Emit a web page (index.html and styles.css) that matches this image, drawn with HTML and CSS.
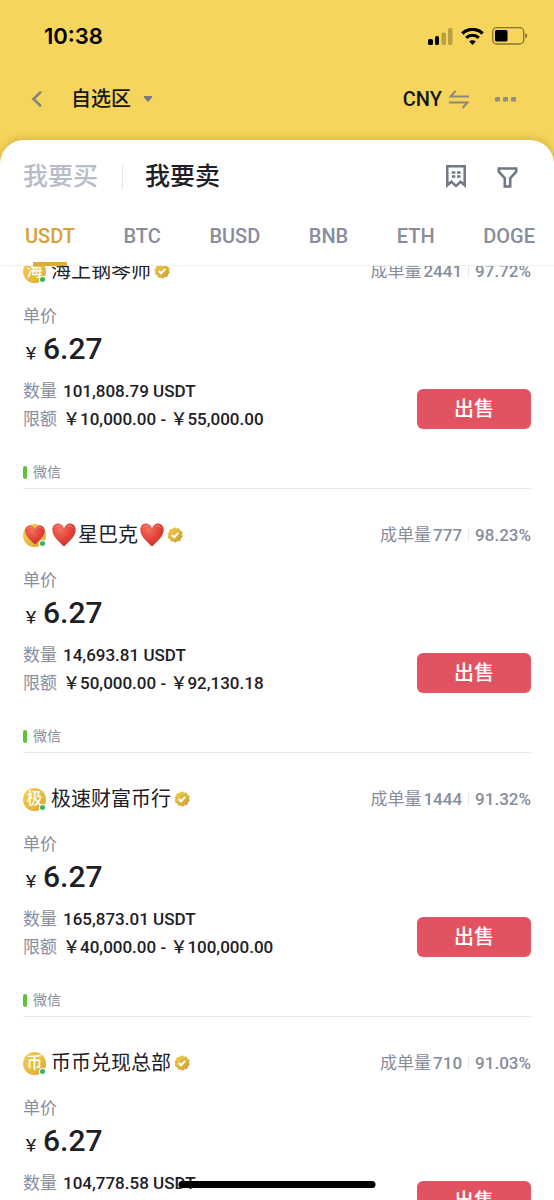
FILE: index.html
```html
<!DOCTYPE html>
<html lang="zh-CN">
<head>
<meta charset="utf-8">
<meta name="viewport" content="width=device-width, initial-scale=1">
<title>自选区</title>
<link rel="stylesheet" href="styles.css">
</head>
<body>
<svg class="defs" aria-hidden="true">
  <defs>
    <linearGradient id="gold" x1="0" y1="0" x2="1" y2="1">
      <stop offset="0" stop-color="#f3cf4c"/><stop offset="1" stop-color="#c99b2c"/>
    </linearGradient>
    <radialGradient id="red" cx=".35" cy=".25" r=".8">
      <stop offset="0" stop-color="#f4705f"/><stop offset=".55" stop-color="#e5443a"/><stop offset="1" stop-color="#c2302a"/>
    </radialGradient>
    <symbol id="badge" viewBox="0 0 16 16">
      <path fill="url(#gold)" stroke="url(#gold)" stroke-width="1" stroke-linejoin="round" d="M8 .8 9.9 2.1 12.2 1.9 13.1 4 15.1 5.200 14.600 7.500 15.300 9.700 13.600 11.200 12.900 13.500 10.600 13.700 8.700 15.200 6.700 14 4.300 14.200 3.500 12.100 1.300 11 1.700 8.700 .8 6.500 2.500 4.900 3 2.600 5.300 2.300Z"/>
      <path fill="none" stroke="#fff" stroke-width="2" d="m4.800 8 2.300 2.300 4.300-4.400"/>
    </symbol>
    <symbol id="heart" viewBox="0 0 24 24">
      <path fill="url(#red)" d="M12 5C10.500 2 8.500 .6 6 .6 2.700 .6 .3 3.300 .3 7c0 6.500 6.700 11.500 11.700 16.600C17 18.500 23.700 13.500 23.700 7c0-3.700-2.400-6.400-5.700-6.400-2.500 0-4.500 1.400-6 4.400Z"/>
      <path fill="none" stroke="#f9a090" stroke-width="1" stroke-linecap="round" opacity=".7" d="M3 4.500C4 2.800 6.500 2 8.500 3.200M15.500 3.200c2-1.200 4.500-.4 5.500 1.300"/>
    </symbol>
  </defs>
</svg>

<header class="top">
  <div class="status">
    <span class="time">10:38</span>
    <div class="signals">
      <svg width="25" height="17" viewBox="0 0 25 17" aria-label="信号">
        <rect x="0" y="11" width="5" height="6" rx="1.500"/>
        <rect x="7" y="8" width="4" height="9" rx="1.500"/>
        <rect x="13.500" y="4.500" width="4.500" height="12.500" rx="1.500" opacity=".25"/>
        <rect x="20" y="0" width="4.500" height="17" rx="1.500" opacity=".25"/>
      </svg>
      <svg width="23" height="17" viewBox="0 0 23 17" aria-label="无线网络">
        <g fill="none" stroke="#000" stroke-width="3.200">
          <path d="M1.300 5.500a14.500 14.500 0 0 1 20.400 0"/>
          <path d="M5.200 9.800a9 9 0 0 1 12.600 0"/>
        </g>
        <path d="M11.500 17 8.200 13.600a4.700 4.700 0 0 1 6.600 0Z"/>
      </svg>
      <svg width="36" height="18" viewBox="0 0 36 18" aria-label="电池">
        <rect x=".7" y=".7" width="31" height="16.300" rx="4" fill="none" stroke="#000" stroke-width="1.300" opacity=".45"/>
        <rect x="3" y="3" width="12.500" height="11.500" rx="1.500"/>
        <path d="M33.300 6.300c2.400.8 2.400 4.300 0 5.100Z" opacity=".5"/>
      </svg>
    </div>
  </div>
  <nav class="bar">
    <button class="icon-btn back" type="button" aria-label="返回">
      <svg width="12" height="18" viewBox="0 0 12 18"><path d="M10 1.800 2.500 9l7.500 7.200" fill="none" stroke="#86857e" stroke-width="2.600"/></svg>
    </button>
    <button class="zone" type="button">自选区
      <svg width="10" height="8" viewBox="0 0 10 8"><path d="M1.500 1h7a.8.8 0 0 1 .6 1.300L5.600 6.500a.8.8 0 0 1-1.200 0L.9 2.300A.8.8 0 0 1 1.500 1Z" fill="#7b7c82"/></svg>
    </button>
    <button class="currency" type="button">CNY
      <svg width="22" height="19" viewBox="0 0 22 19"><path d="M21 6.500H2.500L7.500 1M1 12.500h18.500l-5 5.500" fill="none" stroke="#8b8878" stroke-width="1.900"/></svg>
    </button>
    <button class="icon-btn" type="button" aria-label="更多">
      <svg width="21" height="5" viewBox="0 0 21 5" fill="#918f8c"><rect width="5" height="4.500" rx=".8"/><rect x="8" width="5" height="4.500" rx=".8"/><rect x="16" width="5" height="4.500" rx=".8"/></svg>
    </button>
  </nav>
</header>

<main class="sheet">
  <div class="sides">
    <button class="side" type="button">我要买</button>
    <span class="rule"></span>
    <button class="side active" type="button">我要卖</button>
    <button class="icon-btn orders" type="button" aria-label="订单">
      <svg width="20" height="24" viewBox="0 0 20 24">
        <path d="M1.300 20.300V1.300h17.400v19l-4-3.600-4.700 4.200-4.700-4.200Z" fill="none" stroke="#6f7785" stroke-width="2.500"/>
        <path d="M5.800 6.200h3.500v2.500H5.800zM11 6.200h3.500v2.500H11zM5.800 10.300h3.500v2.500H5.800zM11 10.300h3.500v2.500H11z" fill="#6f7785"/>
      </svg>
    </button>
    <button class="icon-btn" type="button" aria-label="筛选">
      <svg width="21" height="21" viewBox="0 0 21 21"><path d="M1.800 1.500h17.400v3.200l-6 6.500v8.300H7.800v-8.300l-6-6.500Z" fill="none" stroke="#6f7785" stroke-width="2.600"/></svg>
    </button>
  </div>
  <nav class="coins">
    <a class="coin active" href="#usdt">USDT</a>
    <a class="coin" href="#btc">BTC</a>
    <a class="coin" href="#busd">BUSD</a>
    <a class="coin" href="#bnb">BNB</a>
    <a class="coin" href="#eth">ETH</a>
    <a class="coin" href="#doge">DOGE</a>
  </nav>

  <div class="viewport">
    <div class="list">
      <article class="offer">
        <div class="head">
          <span class="avatar">海</span>
          <h2 class="name">海上钢琴师</h2>
          <svg class="badge"><use href="#badge"/></svg>
          <p class="stats">成单量 <b>2441</b><i class="sep"></i><b>97.72%</b></p>
        </div>
        <p class="label">单价</p>
        <p class="price"><span class="yen">￥</span>6.27</p>
        <div class="body">
          <dl class="facts">
            <dt>数量</dt><dd>101,808.79 USDT</dd>
            <dt>限额</dt><dd>￥10,000.00 - ￥55,000.00</dd>
          </dl>
          <button class="sell" type="button">出售</button>
        </div>
        <p class="pay">微信</p>
      </article>

      <article class="offer">
        <div class="head">
          <span class="avatar"><svg class="heart small"><use href="#heart"/></svg></span>
          <h2 class="name with-hearts"><svg class="heart"><use href="#heart"/></svg>星巴克<svg class="heart"><use href="#heart"/></svg></h2>
          <svg class="badge"><use href="#badge"/></svg>
          <p class="stats">成单量 <b>777</b><i class="sep"></i><b>98.23%</b></p>
        </div>
        <p class="label">单价</p>
        <p class="price"><span class="yen">￥</span>6.27</p>
        <div class="body">
          <dl class="facts">
            <dt>数量</dt><dd>14,693.81 USDT</dd>
            <dt>限额</dt><dd>￥50,000.00 - ￥92,130.18</dd>
          </dl>
          <button class="sell" type="button">出售</button>
        </div>
        <p class="pay">微信</p>
      </article>

      <article class="offer">
        <div class="head">
          <span class="avatar">极</span>
          <h2 class="name">极速财富币行</h2>
          <svg class="badge"><use href="#badge"/></svg>
          <p class="stats">成单量 <b>1444</b><i class="sep"></i><b>91.32%</b></p>
        </div>
        <p class="label">单价</p>
        <p class="price"><span class="yen">￥</span>6.27</p>
        <div class="body">
          <dl class="facts">
            <dt>数量</dt><dd>165,873.01 USDT</dd>
            <dt>限额</dt><dd>￥40,000.00 - ￥100,000.00</dd>
          </dl>
          <button class="sell" type="button">出售</button>
        </div>
        <p class="pay">微信</p>
      </article>

      <article class="offer">
        <div class="head">
          <span class="avatar">币</span>
          <h2 class="name">币币兑现总部</h2>
          <svg class="badge"><use href="#badge"/></svg>
          <p class="stats">成单量 <b>710</b><i class="sep"></i><b>91.03%</b></p>
        </div>
        <p class="label">单价</p>
        <p class="price"><span class="yen">￥</span>6.27</p>
        <div class="body">
          <dl class="facts">
            <dt>数量</dt><dd>104,778.58 USDT</dd>
          </dl>
          <button class="sell" type="button">出售</button>
        </div>
      </article>
    </div>
  </div>
</main>
<div class="home-indicator"></div>
</body>
</html>
```
FILE: styles.css
```css
* { box-sizing: border-box; margin: 0; padding: 0; }

body {
  display: flex;
  flex-direction: column;
  height: 100vh;
  overflow: hidden;
  background: #f5d55b;
  color: #1e2026;
  font: 500 17px/20px Roboto, "Noto Sans CJK SC", sans-serif;
}

button { border: 0; background: none; color: inherit; font: inherit; cursor: pointer; }
svg { display: block; flex: none; }
.defs { position: absolute; width: 0; height: 0; }
.icon-btn { display: flex; align-items: center; }

/* Top area */
.status {
  display: flex;
  align-items: center;
  justify-content: space-between;
  height: 72px;
  padding: 0 26px 0 44px;
}
.time { color: #000; font: 600 22px/28px Inter, sans-serif; }
.signals { display: flex; align-items: center; gap: 8px; }
.bar {
  display: flex;
  align-items: center;
  height: 68px;
  padding: 0 38px 14px 31px;
  color: #14151a;
  font-size: 20px;
  line-height: 28px;
}
.zone { display: flex; align-items: center; gap: 12px; margin-left: 28px; }
.currency { display: flex; align-items: center; gap: 6px; margin: 0 25px 0 auto; }

/* Sheet */
.sheet {
  display: flex;
  flex: 1;
  flex-direction: column;
  min-height: 0;
  border-radius: 24px 24px 0 0;
  background: #fff;
  box-shadow: 0 -1px 10px rgba(120, 90, 0, .3);
}
.sides { display: flex; align-items: center; height: 74px; padding: 0 36px 0 23px; }
.side { color: #b7bdc8; font-size: 25px; line-height: 36px; }
.side.active { color: #1e2026; }
.rule { width: 1px; height: 26px; margin: 0 22px 0 24px; background: #e6e8ec; }
.orders { margin: 0 31px 0 auto; }

.coins {
  display: flex;
  justify-content: space-between;
  height: 52px;
  padding: 0 19px 0 25px;
  border-bottom: 1px solid #eef0f2;
  font-size: 20px;
  line-height: 44px;
}
.coin { position: relative; color: #878d9b; text-decoration: none; }
.coin.active { color: #d9a134; }
.coin.active::after {
  content: "";
  position: absolute;
  bottom: -1px;
  left: 8px;
  z-index: 1;
  width: 34px;
  height: 4px;
  background: #dcab3c;
}

/* Offers, scrolled part-way through the first one */
.viewport { flex: 1; min-height: 0; overflow: hidden; }
.list { margin-top: -41px; padding: 0 23px; }
.offer { padding: 34px 0 6px; border-bottom: 1px solid #e6e8ea; }
.head { display: flex; align-items: center; height: 24px; }
.avatar {
  position: relative;
  display: flex;
  align-items: center;
  justify-content: center;
  width: 23px;
  height: 23px;
  margin-right: 5px;
  border-radius: 50%;
  background: linear-gradient(135deg, #f3d04f, #dcaa35);
  color: #fff;
  font-size: 16px;
}
.avatar::after {
  content: "";
  position: absolute;
  right: 1px;
  bottom: 1px;
  width: 5px;
  height: 5px;
  border-radius: 50%;
  background: #35b36b;
  box-shadow: 0 0 0 1px #fff;
}
.name { display: flex; align-items: center; gap: 2px; font-size: 20px; font-weight: 400; line-height: 24px; }
.name.with-hearts { padding-left: 1px; }
.badge { width: 16px; height: 16px; margin-left: 3px; }
.heart { width: 24px; height: 24px; }
.heart.small { width: 20px; height: 20px; }
.stats { display: flex; align-items: center; gap: 2px; margin-left: auto; color: #878d9b; font-weight: 400; }
.stats b { font-weight: 500; }
.sep { width: 1px; height: 12px; margin: 0 4px; background: #e6e8ec; }

.label { margin-top: 23px; color: #878d9b; font-weight: 400; }
.price { display: flex; align-items: baseline; gap: 4px; height: 36px; margin-top: 5px; font-size: 30px; line-height: 36px; }
.yen { font-size: 16px; line-height: 20px; }

.body { display: flex; align-items: flex-start; justify-content: space-between; margin-top: 10px; }
.facts { display: grid; grid-template-columns: auto auto; column-gap: 6px; line-height: 28px; }
.facts dt { color: #878d9b; font-weight: 400; }
.sell {
  width: 114px;
  height: 40px;
  margin-top: 12px;
  border-radius: 6px;
  background: #e15361;
  color: #fff;
  font-size: 20px;
}
.pay { display: flex; align-items: center; gap: 6px; margin-top: 29px; color: #878d9b; font-size: 14px; font-weight: 400; }
.pay::before { content: ""; width: 4px; height: 13px; border-radius: 2px; background: #5fc234; }

.home-indicator {
  position: fixed;
  bottom: 12px;
  left: 50%;
  width: 197px;
  height: 7px;
  border-radius: 4px;
  background: #000;
  transform: translateX(-50%);
}
```
